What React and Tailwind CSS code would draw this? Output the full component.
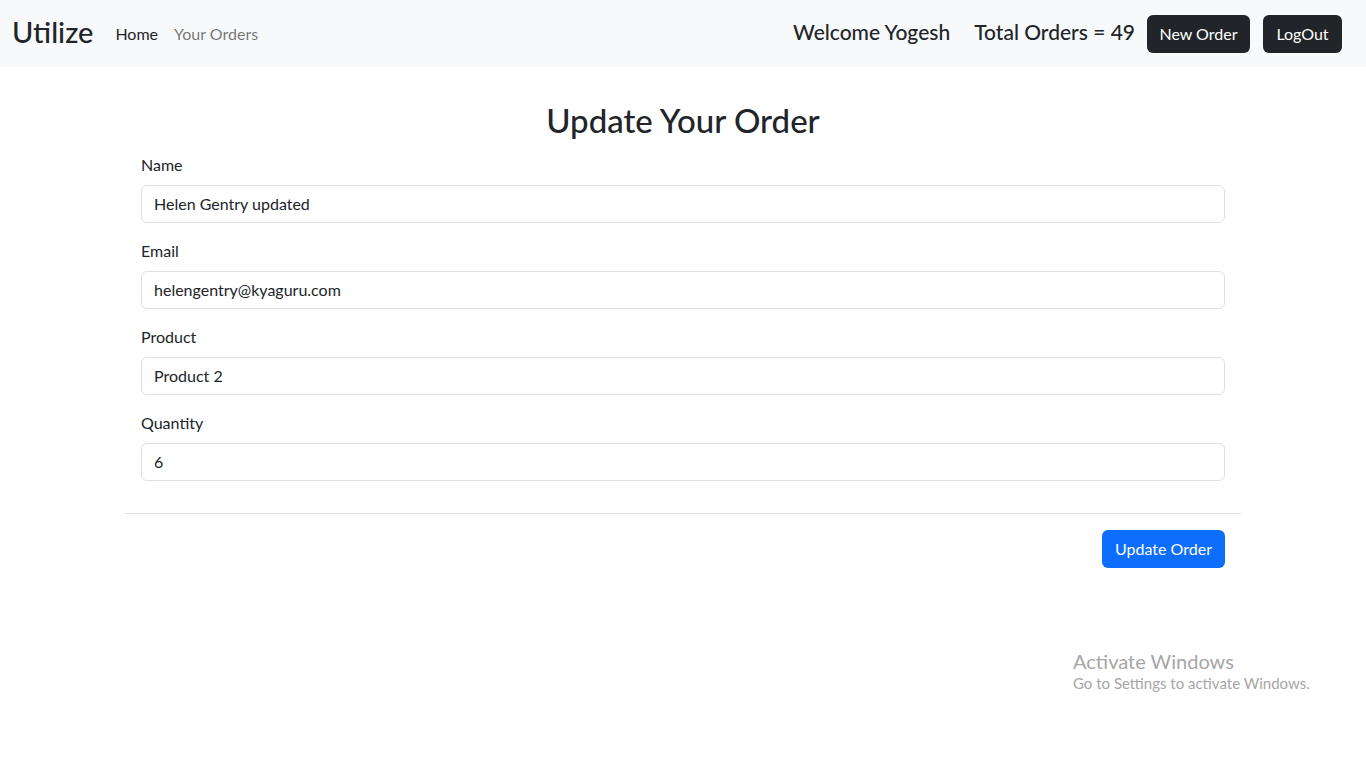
function Field({ label, value }) {
  return (
    <div className="mb-4">
      <label className="block mb-2 text-base leading-6 text-[#212529]">{label}</label>
      <input
        defaultValue={value}
        className="w-full h-[38px] px-3 border border-[#dee2e6] rounded-[6px] text-base text-[#212529] bg-white outline-none"
      />
    </div>
  )
}

export default function App() {
  return (
    <div className="min-h-screen bg-white text-[#212529] relative font-['Lato',sans-serif]">
      <nav className="h-[67px] bg-[#f8f9fa] flex items-center pl-3 pr-6">
        <span className="text-[29px] font-medium mr-[22px] -mt-1">Utilize</span>
        <a className="text-base text-[#212529] mr-4">Home</a>
        <a className="text-base text-[#0000008c]">Your Orders</a>
        <div className="ml-auto flex items-center">
          <span className="text-[21px] font-medium mr-6 -mt-1">Welcome Yogesh</span>
          <span className="text-[21px] font-medium mr-3 -mt-1">Total Orders = 49</span>
          <button className="h-[38px] w-[103px] bg-[#212529] text-white rounded-[6px] text-base mr-[13px]">New Order</button>
          <button className="h-[38px] w-[79px] bg-[#212529] text-white rounded-[6px] text-base">LogOut</button>
        </div>
      </nav>
      <div className="w-[1116px] ml-[125px] pt-[34px]">
        <h2 className="text-[33px] font-medium leading-[1.2] text-center mb-3">Update Your Order</h2>
        <div className="px-4">
          <Field label="Name" value="Helen Gentry updated" />
          <Field label="Email" value="helengentry@kyaguru.com" />
          <Field label="Product" value="Product 2" />
          <Field label="Quantity" value="6" />
        </div>
        <div className="border-t border-[#dee2e6] mt-8 pt-4 px-4 flex justify-end">
          <button className="h-[38px] w-[123px] bg-[#0d6efd] text-white rounded-[6px] text-base">Update Order</button>
        </div>
      </div>
      <div className="absolute left-[1073px] top-[649px] text-[#a6a6a6] pointer-events-none">
        <div className="text-xl leading-6">Activate Windows</div>
        <div className="text-[15px] leading-5">Go to Settings to activate Windows.</div>
      </div>
    </div>
  )
}
